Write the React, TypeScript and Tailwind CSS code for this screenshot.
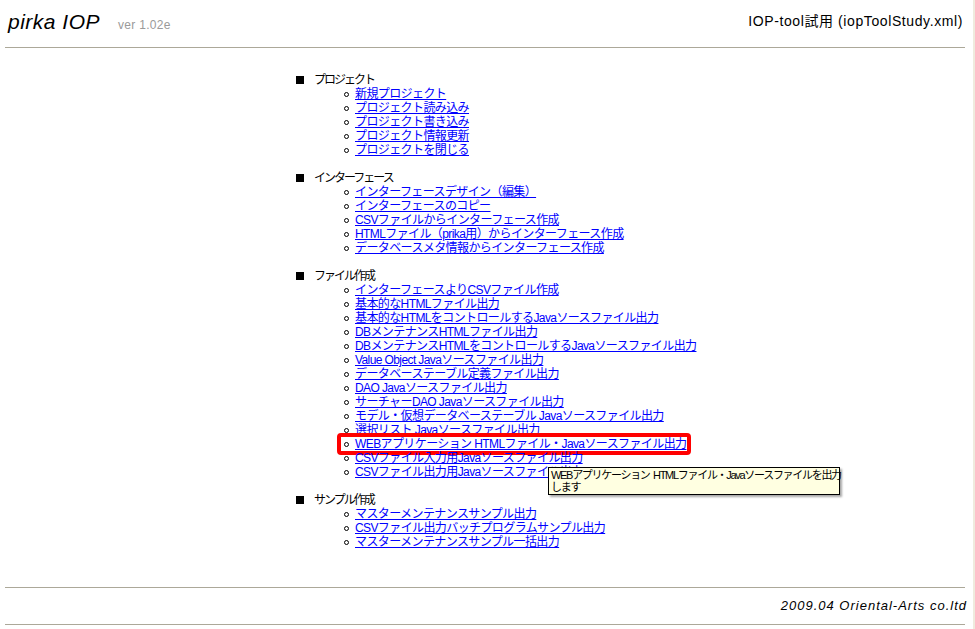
import React from "react";

const sections: { title: string; items: string[] }[] = [
  {
    title: "プロジェクト",
    items: ["新規プロジェクト", "プロジェクト読み込み", "プロジェクト書き込み", "プロジェクト情報更新", "プロジェクトを閉じる"],
  },
  {
    title: "インターフェース",
    items: [
      "インターフェースデザイン（編集）",
      "インターフェースのコピー",
      "CSVファイルからインターフェース作成",
      "HTMLファイル（prika用）からインターフェース作成",
      "データベースメタ情報からインターフェース作成",
    ],
  },
  {
    title: "ファイル作成",
    items: [
      "インターフェースよりCSVファイル作成",
      "基本的なHTMLファイル出力",
      "基本的なHTMLをコントロールするJavaソースファイル出力",
      "DBメンテナンスHTMLファイル出力",
      "DBメンテナンスHTMLをコントロールするJavaソースファイル出力",
      "Value Object Javaソースファイル出力",
      "データベーステーブル定義ファイル出力",
      "DAO Javaソースファイル出力",
      "サーチャーDAO Javaソースファイル出力",
      "モデル・仮想データベーステーブル Javaソースファイル出力",
      "選択リスト Javaソースファイル出力",
      "WEBアプリケーション HTMLファイル・Javaソースファイル出力",
      "CSVファイル入力用Javaソースファイル出力",
      "CSVファイル出力用Javaソースファイル出力",
    ],
  },
  {
    title: "サンプル作成",
    items: ["マスターメンテナンスサンプル出力", "CSVファイル出力バッチプログラムサンプル出力", "マスターメンテナンスサンプル一括出力"],
  },
];

const HL = "WEBアプリケーション HTMLファイル・Javaソースファイル出力";

export default function App() {
  return (
    <div
      className="relative w-[975px] h-[629px] bg-white overflow-hidden text-black"
      style={{ fontFamily: '"Liberation Sans", "Noto Sans CJK JP", sans-serif' }}
    >
      <div className="absolute right-0 top-0 h-full w-[2px] bg-[#efebde]" />
      <div className="flex items-start justify-between pl-[8px] pr-[12px] pt-[10px] h-[47px]">
        <div className="flex items-baseline">
          <span className="italic text-[21px] leading-[24px] tracking-[0.5px]">pirka IOP</span>
          <span className="ml-[18px] text-[12px] text-[#9a9a9a] tracking-[0.3px]">ver 1.02e</span>
        </div>
        <div className="text-[14px] leading-[18px] pt-[2px] tracking-[0.6px]">IOP-tool試用 (iopToolStudy.xml)</div>
      </div>
      <div className="mx-[5px] w-[960px] h-px bg-[#aca899]" />

      <div className="pl-[296px] pt-[25px] h-[539px] text-[12px] leading-[14px]">
        {sections.map((s, si) => (
          <div key={si} className={si > 0 ? "mt-[14px]" : ""}>
            <div className="flex items-center h-[14px]">
              <span className="w-[8px] h-[8px] bg-black" />
              <span className="ml-[10px] tracking-[-2px]">{s.title}</span>
            </div>
            {s.items.map((it, ii) => (
              <div key={ii} className="relative flex items-center h-[14px] pl-[48px]">
                <span className="w-[5px] h-[5px] rounded-full border border-black" />
                <a className="ml-[6px] text-[#0000ff] underline tracking-[-0.6px] whitespace-nowrap" href="#">
                  {it}
                </a>
                {it === HL && (
                  <>
                    <div className="absolute left-[41px] top-[-4px] w-[354px] h-[22px] border-[4px] border-[#ff0000] rounded-[4px]" />
                    <div className="absolute left-[252px] top-[30px] w-[292px] h-[28px] bg-[#ffffe1] border border-black px-[2px] pt-[1px] text-[11px] leading-[12px] tracking-[-1.3px] whitespace-nowrap shadow-[2px_2px_2px_rgba(0,0,0,0.35)] z-10">
                      WEBアプリケーション&nbsp;&nbsp;HTMLファイル・Javaソースファイルを出力
                      <br />
                      します
                    </div>
                  </>
                )}
              </div>
            ))}
          </div>
        ))}
      </div>

      <div className="absolute left-0 top-[587px] w-full">
        <div className="mx-[5px] w-[960px] h-px bg-[#aca899]" />
        <div className="flex justify-end pr-[8px] h-[36px] items-center">
          <span className="italic text-[13px] tracking-[1px]">2009.04 Oriental-Arts co.ltd</span>
        </div>
        <div className="mx-[5px] w-[960px] h-px bg-[#aca899]" />
      </div>
    </div>
  );
}
